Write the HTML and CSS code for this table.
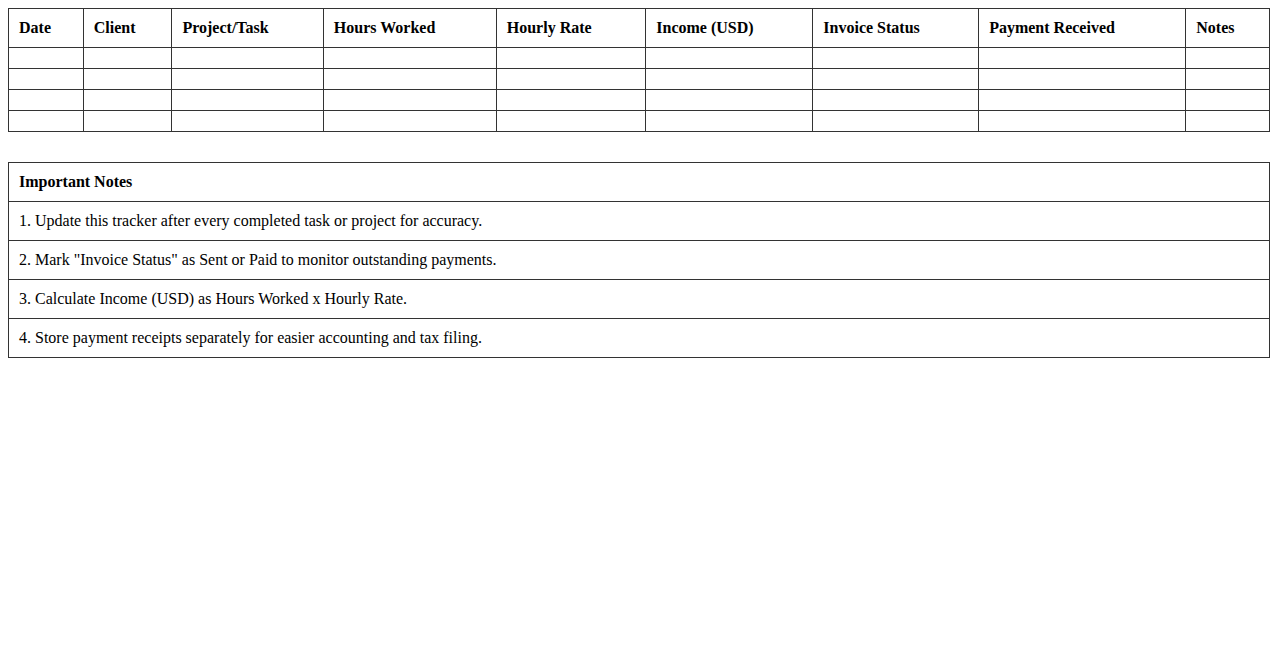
FILE: index.html
```html
<!DOCTYPE html>
<html>
<head>
<meta charset="utf-8">
<link rel="stylesheet" href="styles.css">
</head>
<body>
<table class="tracker">
  <thead>
    <tr>
      <th>Date</th><th>Client</th><th>Project/Task</th><th>Hours Worked</th><th>Hourly Rate</th><th>Income (USD)</th><th>Invoice Status</th><th>Payment Received</th><th>Notes</th>
    </tr>
  </thead>
  <tbody>
    <tr><td></td><td></td><td></td><td></td><td></td><td></td><td></td><td></td><td></td></tr>
    <tr><td></td><td></td><td></td><td></td><td></td><td></td><td></td><td></td><td></td></tr>
    <tr><td></td><td></td><td></td><td></td><td></td><td></td><td></td><td></td><td></td></tr>
    <tr><td></td><td></td><td></td><td></td><td></td><td></td><td></td><td></td><td></td></tr>
  </tbody>
</table>
<table class="tracker notes">
  <thead>
    <tr><th>Important Notes</th></tr>
  </thead>
  <tbody>
    <tr><td>1. Update this tracker after every completed task or project for accuracy.</td></tr>
    <tr><td>2. Mark "Invoice Status" as Sent or Paid to monitor outstanding payments.</td></tr>
    <tr><td>3. Calculate Income (USD) as Hours Worked x Hourly Rate.</td></tr>
    <tr><td>4. Store payment receipts separately for easier accounting and tax filing.</td></tr>
  </tbody>
</table>
</body>
</html>
```
FILE: styles.css
```css
body {
  margin: 8px;
  font-family: "Liberation Serif", "Times New Roman", serif;
  font-size: 16px;
  color: #000;
  background: #fff;
}
.tracker {
  width: 100%;
  border-collapse: collapse;
}
.tracker th,
.tracker td {
  border: 1px solid #333;
  padding: 10px;
  text-align: left;
}
.tracker th {
  font-weight: bold;
}
.notes {
  margin-top: 30px;
}
```
